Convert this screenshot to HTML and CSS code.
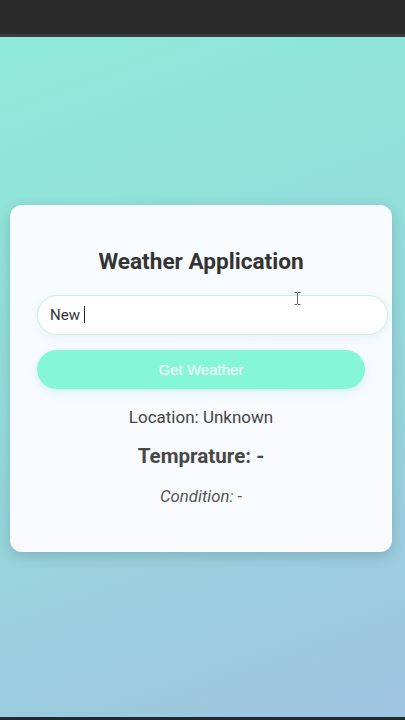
FILE: index.html
```html
<!DOCTYPE html>
<html lang="en">
<head>
<meta charset="utf-8">
<title>Weather Application</title>
<link rel="stylesheet" href="styles.css">
</head>
<body>
<div class="topbar"></div>
<main class="stage">
  <section class="card">
    <h2 class="title">Weather Application</h2>
    <div class="input-wrap">
      <div class="input"><span>New</span><span class="caret"></span></div>
      <svg class="ibeam" width="7" height="13" viewBox="0 0 7 13"><path d="M0.5 0.5h2.5M4 0.5h2.5M3.5 1v11M0.5 12.5h2.5M4 12.5h2.5" stroke="#666" stroke-width="1" fill="none"/></svg>
    </div>
    <button class="btn">Get Weather</button>
    <p class="location">Location: Unknown</p>
    <p class="temp">Temprature: -</p>
    <p class="cond">Condition: -</p>
  </section>
</main>
<div class="bottombar"></div>
</body>
</html>
```
FILE: styles.css
```css
html, body {
  margin: 0;
  padding: 0;
  height: 100%;
}
body {
  font-family: Roboto, "Liberation Sans", sans-serif;
  display: flex;
  flex-direction: column;
  background: #2b2b2b;
}
.topbar {
  height: 34px;
  background: #2b2b2b;
  border-bottom: 3px solid #3b3b3b;
  flex: none;
}
.stage {
  flex: 1;
  display: flex;
  align-items: center;
  justify-content: flex-start;
  padding-left: 10px;
  background: linear-gradient(160deg, #8eeada 0%, #95dadc 50%, #a0c4e0 100%);
}
.bottombar {
  height: 3px;
  background: #1f2a2e;
  flex: none;
}
.card {
  width: 382px;
  box-sizing: border-box;
  padding: 44px 27px 45px;
  background: linear-gradient(170deg, #f7fbfd, #f8fafd);
  border-radius: 12px;
  box-shadow: 0 4px 14px rgba(0, 0, 0, 0.16);
  text-align: center;
  margin-top: 2px;
}
.title {
  margin: 0 0 20px;
  font-size: 22.6px;
  line-height: 26px;
  font-weight: 700;
  color: #333;
}
.input-wrap {
  position: relative;
}
.input {
  width: calc(100% + 23px);
  box-sizing: border-box;
  height: 40px;
  border: 1px solid #c9eee3;
  border-radius: 20px;
  background: #fff;
  padding: 0 12px;
  display: flex;
  align-items: center;
  font-size: 15px;
  color: #333;
  box-shadow: 0 2px 8px rgba(120, 200, 190, 0.15);
  text-align: left;
}
.caret {
  display: inline-block;
  width: 1px;
  height: 17px;
  background: #222;
  margin-left: 4px;
}
.ibeam {
  position: absolute;
  left: 257px;
  top: -3px;
}
.btn {
  display: block;
  width: 100%;
  height: 39px;
  margin-top: 15px;
  border: none;
  border-radius: 20px;
  background: #85f7d7;
  color: #fff;
  font-family: "Liberation Sans", Arial, sans-serif;
  font-size: 15px;
  box-shadow: 0 4px 10px rgba(120, 230, 200, 0.25);
}
.location {
  margin: 18px 0 0;
  font-size: 17px;
  line-height: 20px;
  color: #444;
}
.temp {
  margin: 17px 0 0;
  font-size: 20.6px;
  line-height: 24px;
  font-weight: 700;
  color: #474747;
}
.cond {
  margin: 18px 0 0;
  font-size: 16.8px;
  line-height: 21px;
  font-style: italic;
  color: #555;
}
```
